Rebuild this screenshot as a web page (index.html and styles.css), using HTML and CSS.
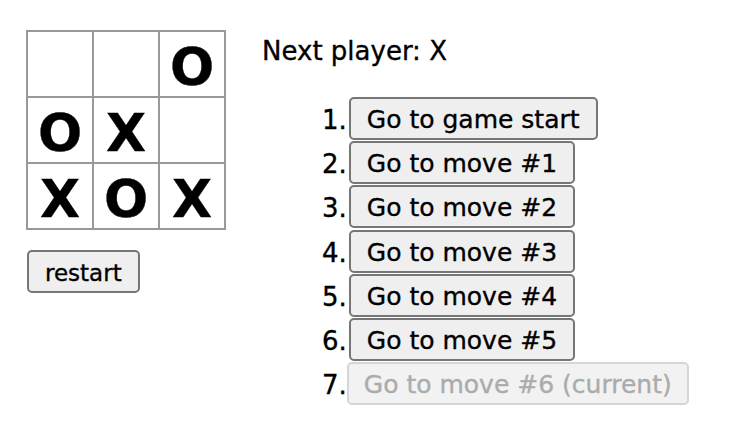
FILE: index.html
```html
<!DOCTYPE html>
<html lang="en">
<head>
    <meta charset="UTF-8">
    <meta name="viewport" content="width=device-width, initial-scale=1.0">
    <title>Tic-Tac-Toe</title>
    <link rel="stylesheet" href="styles.css">
</head>
<body>
    <div class="game">
        <div class="game-board">
            <div class="board">
                <button class="square"></button>
                <button class="square"></button>
                <button class="square">O</button>
                <button class="square">O</button>
                <button class="square">X</button>
                <button class="square"></button>
                <button class="square">X</button>
                <button class="square">O</button>
                <button class="square">X</button>
            </div>
            <button class="restart">restart</button>
        </div>
        <div class="game-info">
            <div class="status">Next player: X</div>
            <ol class="moves">
                <li><button class="move">Go to game start</button></li>
                <li><button class="move">Go to move #1</button></li>
                <li><button class="move">Go to move #2</button></li>
                <li><button class="move">Go to move #3</button></li>
                <li><button class="move">Go to move #4</button></li>
                <li><button class="move">Go to move #5</button></li>
                <li><button class="move" disabled>Go to move #6 (current)</button></li>
            </ol>
        </div>
    </div>
</body>
</html>
```

FILE: styles.css
```css
body {
    font-family: "DejaVu Sans", sans-serif;
    font-size: 26px;
    color: #000;
    background-color: #fff;
    margin: 0;
    padding: 30px 0 0 26px;
    -webkit-text-stroke: 0.35px currentColor;
}

.game {
    display: flex;
    flex-direction: row;
    gap: 36px;
}

.game-board {
    display: flex;
    flex-direction: column;
    align-items: flex-start;
    gap: 20px;
}

.board {
    display: grid;
    grid-template-columns: repeat(3, 66px);
    grid-template-rows: repeat(3, 66px);
    border-left: 2px solid #999;
    border-top: 2px solid #999;
}

.square {
    display: flex;
    justify-content: center;
    align-items: center;
    box-sizing: border-box;
    width: 66px;
    height: 66px;
    margin: 0;
    padding: 5px 0 0 0;
    background: #fff;
    border: none;
    border-right: 2px solid #999;
    border-bottom: 2px solid #999;
    font-family: "DejaVu Sans", sans-serif;
    font-size: 52px;
    font-weight: bold;
    line-height: 1;
    color: #000;
}

.restart,
.move {
    box-sizing: border-box;
    height: 43px;
    margin: 0 0 0 1px;
    padding: 2px 16px 0 16px;
    background-color: #efefef;
    border: 2px solid #767676;
    border-radius: 5px;
    font-family: "DejaVu Sans", sans-serif;
    color: #000;
    -webkit-text-stroke: 0.35px currentColor;
}

.restart {
    font-size: 23px;
}

.move {
    margin: 0 0 0 2px;
    font-size: 25px;
    white-space: nowrap;
}

.move:disabled {
    padding: 2px 15px 0 15px;
    margin: 0;
    background-color: #f2f2f2;
    border-color: #d6d6d6;
    color: #ababab;
}

.game-info {
    padding-top: 6px;
}

.status {
    line-height: 30px;
}

.moves {
    list-style: none;
    counter-reset: step;
    margin: 30px 0 0 0;
    padding-left: 60px;
}

.moves li {
    counter-increment: step;
    display: flex;
    align-items: center;
    height: 44.3px;
}

.moves li::before {
    content: counter(step) ".";
    padding-top: 3px;
}
```
